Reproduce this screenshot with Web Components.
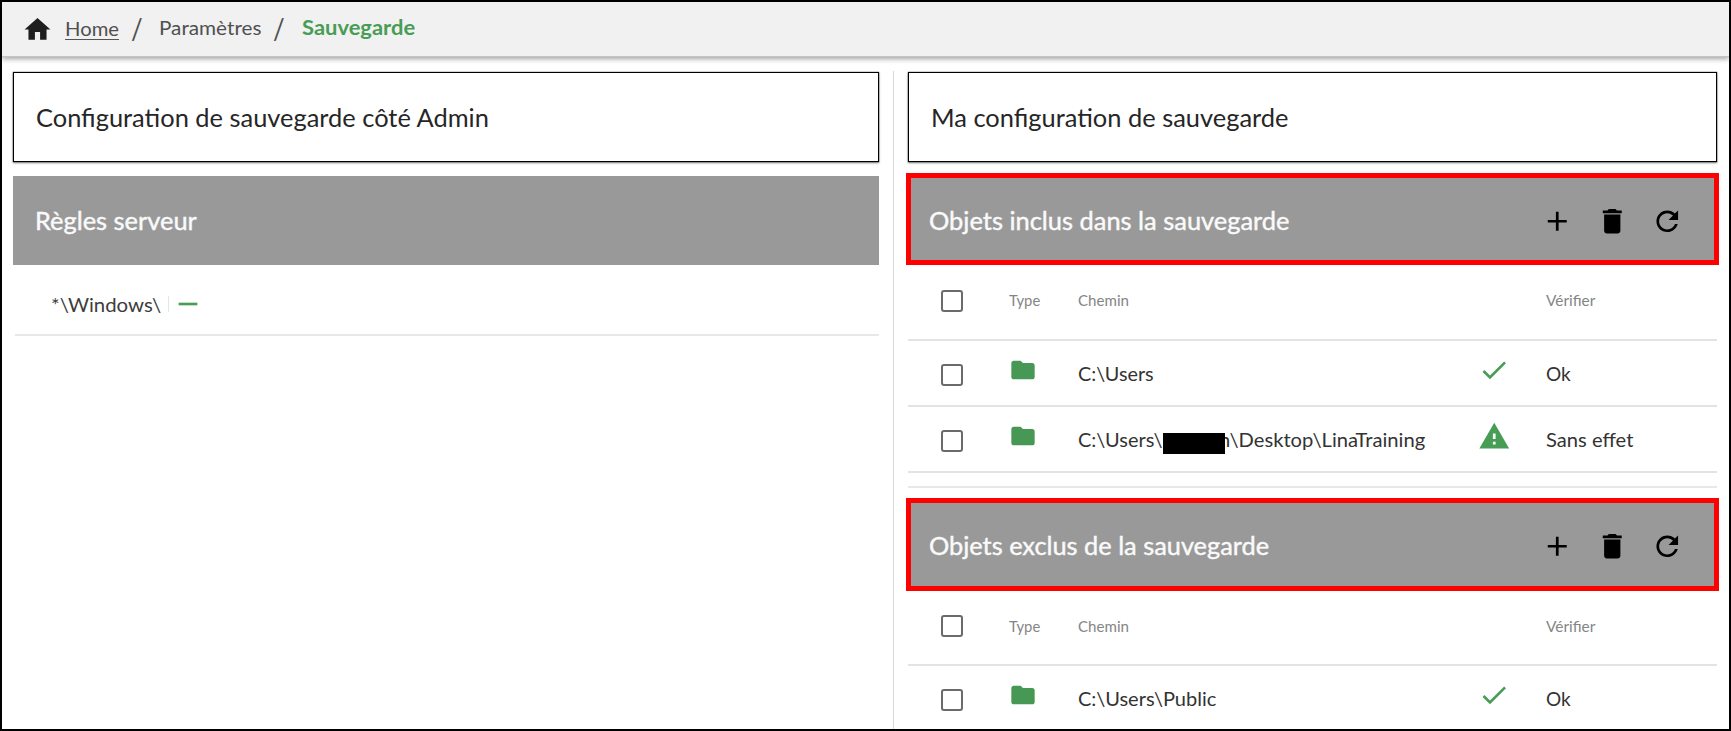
<!DOCTYPE html>
<html lang="fr">
<head>
<meta charset="utf-8">
<title>Sauvegarde</title>
<style>
  html, body { margin: 0; height: 100%; }
  body { font-family: Lato, "Open Sans", sans-serif; color: #2a2a2a; background: #fff; overflow: hidden; }
</style>
</head>
<body>
<backup-page></backup-page>
<script>
const define = (name, html, setup) => {
  const template = document.createElement('template');
  template.innerHTML = html;
  customElements.define(name, class extends HTMLElement {
    connectedCallback() {
      if (this.shadowRoot) return;
      this.attachShadow({ mode: 'open' }).append(template.content.cloneNode(true));
      if (setup) setup(this, this.shadowRoot);
    }
  });
};

/* Text condensed or expanded to an exact advance width. */
define('fit-text', `
<style>
  :host { display: inline-block; white-space: nowrap; line-height: 1.2; flex: none; }
  span { display: inline-block; transform-origin: 0 50%; white-space: pre; }
</style><span><slot></slot></span>`, (el, root) => {
  const span = root.querySelector('span');
  const w = +el.getAttribute('w');
  span.style.transform = 'scaleX(' + w / span.offsetWidth + ')';
  el.style.width = w + 'px';
});

const ICONS = {
  home: 'M10 20v-6h4v6h5v-8h3L12 3 2 12h3v8z',
  add: 'M19 13h-6v6h-2v-6H5v-2h6V5h2v6h6v2z',
  delete: 'M6 19c0 1.1.9 2 2 2h8c1.1 0 2-.9 2-2V7H6v12zM19 4h-3.5l-1-1h-5l-1 1H5v2h14V4z',
  refresh: 'M17.65 6.35C16.2 4.9 14.21 4 12 4c-4.42 0-7.99 3.58-7.99 8s3.57 8 7.99 8c3.73 0 6.84-2.55 7.73-6h-2.08c-.82 2.33-3.04 4-5.65 4-3.31 0-6-2.69-6-6s2.69-6 6-6c1.66 0 3.14.69 4.22 1.78L13 11h7V4l-2.35 2.35z',
  folder: 'M10 4H4c-1.1 0-1.99.9-1.99 2L2 18c0 1.1.9 2 2 2h16c1.1 0 2-.9 2-2V8c0-1.1-.9-2-2-2h-8l-2-2z',
  check: 'M9 16.17L4.83 12l-1.42 1.41L9 19 21 7l-1.41-1.41z',
  warning: 'M1 21h22L12 2 1 21zm12-3h-2v-2h2v2zm0-4h-2v-4h2v4z',
  remove: 'M19 13H5v-2h14v2z'
};
define('ui-icon', `
<style>:host { display: block; flex: none; } svg { display: block; fill: currentColor; width: 100%; height: 100%; }</style>
<svg viewBox="0 0 24 24"><path/></svg>`, (el, root) => {
  const s = el.getAttribute('size');
  el.style.width = el.style.height = s + 'px';
  root.querySelector('path').setAttribute('d', ICONS[el.getAttribute('name')]);
});

define('check-box', `
<style>:host { display: block; box-sizing: border-box; width: 22px; height: 22px; border: 2px solid #6b6b6b; border-radius: 3px; }</style>`);

define('bread-crumbs', `
<style>
  :host { display: flex; align-items: center; box-sizing: border-box; flex: none; height: 55px; padding: 0 0 5px 20px;
    background: #f1f1f1; border-bottom: 1px solid #c4c4c4; box-shadow: 0 2px 5px rgba(0,0,0,.36); font-size: 19.5px; color: #505050; position: relative; }
  ui-icon { color: #1e1e1e; margin: 6px 12px 0 0; }
  .home { margin-top: 5px; border-bottom: 1.5px solid #555; line-height: 20px; height: 20px; margin-right: 12px; }
  .sep { font-size: 28px; margin-top: 4px; }
  .par { margin: 2px 12px 0 16px; }
  .cur { margin: 1px 0 0 17px; color: #489d56; font-weight: 700; font-size: 20px; }
</style>
<ui-icon name="home" size="31"></ui-icon>
<fit-text class="home" w="54">Home</fit-text>
<fit-text class="sep" w="12">/</fit-text>
<fit-text class="par" w="102">Paramètres</fit-text>
<fit-text class="sep" w="12">/</fit-text>
<fit-text class="cur" w="113">Sauvegarde</fit-text>`);

define('title-card', `
<style>:host { display: flex; align-items: center; box-sizing: border-box; height: 90px; flex: none; margin: 1px 0 14px; padding: 1px 0 0 22px;
  border: 1px solid #000; box-shadow: 0 0 1px rgba(0,0,0,.8), 0 1px 2px rgba(0,0,0,.5); font-size: 24.3px; color: #262626; }</style><slot></slot>`);

define('section-bar', `
<style>
  :host { display: flex; align-items: center; box-sizing: border-box; height: 89px; flex: none; padding: 0 38px 0 21.5px; background: #999; color: #fafafa; font-size: 24.3px; -webkit-text-stroke: .4px #fafafa; }
  :host([outlined]) { height: 92px; margin: -3px -2px 0; padding: 3px 31px 0 18px; border: 5px solid #f00; }
  :host([tall]) { height: 93px; }
  div { display: flex; gap: 22.5px; margin: 1px 0 0 auto; color: #000; }
  :host([tall]) div { margin-top: 0; }
</style>
<slot></slot><div><slot name="actions"></slot></div>`);

define('object-row', `
<style>
  :host { display: grid; grid-template-columns: 68px 69px 400px 68px 1fr; align-items: center; box-sizing: border-box; flex: none;
    height: 66px; padding-left: 33px; border-bottom: 2px solid #e3e3e3; font-size: 19px; color: #333; }
  :host([head]) { height: 76px; font-size: 14.8px; color: #858585; }
  :host([short]) { height: 75px; }
  :host([head]) check-box { margin-top: -3px; }
  :host([head]) ::slotted(*) { margin-top: -2px; }
  ::slotted(*) { margin-top: 3px; }
  check-box { margin-top: 4px; }
  .type { margin: -6px 0 0 0; color: #489855; }
</style>
<check-box></check-box>
<slot name="type"><ui-icon class="type" name="folder" size="28"></ui-icon></slot>
<slot name="path"></slot>
<slot name="state"><span></span></slot>
<slot name="verify"></slot>`);

define('rule-row', `
<style>
  :host { display: flex; align-items: center; box-sizing: border-box; height: 71px; margin-left: 2px; padding: 8px 0 0 36px; border-bottom: 2px solid #e8e8e8; font-size: 20px; color: #3d3d3d; }
  i { width: 1px; height: 16px; margin: 1px 3px 0 7px; background: #dfeae5; }
  ui-icon { color: #489d56; margin-top: 0; }
</style>
<slot></slot><i></i><ui-icon name="remove" size="32"></ui-icon>`);

/* Path whose user name is masked by a black block. */
define('masked-path', `
<style>
  :host { display: flex; align-items: center; }
  b { width: 62px; height: 21px; margin: 6px -6px 0 0; background: #000; position: relative; z-index: 1; }
</style>
<fit-text w="85">C:\\Users\\</fit-text><b></b><fit-text w="206">n\\Desktop\\LinaTraining</fit-text>`);

const actions = `<ui-icon slot="actions" name="add" size="32.5"></ui-icon><ui-icon slot="actions" name="delete" size="32.5"></ui-icon><ui-icon slot="actions" name="refresh" size="32.5"></ui-icon>`;
const head = (attr = '') => `<object-row head ${attr}><fit-text slot="type" w="31">Type</fit-text><fit-text slot="path" w="51">Chemin</fit-text><fit-text slot="verify" w="49">Vérifier</fit-text></object-row>`;

define('backup-page', `
<style>
  :host { display: flex; flex-direction: column; box-sizing: border-box; height: 731px; border: 2px solid #000; overflow: hidden; }
  main { display: grid; grid-template-columns: 866px 29px 809px; flex: 1; min-height: 0; padding: 14px 0 0 11px; }
  section { display: flex; flex-direction: column; min-width: 0; }
  .split { margin-left: 14px; width: 1px; background: #d9d9d9; }
  .gap { height: 15px; box-sizing: border-box; flex: none; border-bottom: 2px solid #e8e8e8; }
  .second { display: flex; flex-direction: column; margin-top: 13px; }
  .state { color: #489d56; margin: -7px 0 0 0; }
  .warn { margin: -6px 0 0 -.5px; }
</style>
<bread-crumbs></bread-crumbs>
<main>
  <section>
    <title-card><fit-text w="453">Configuration de sauvegarde côté Admin</fit-text></title-card>
    <section-bar><fit-text w="162">Règles serveur</fit-text></section-bar>
    <rule-row><fit-text w="110">*\\Windows\\</fit-text></rule-row>
  </section>
  <div class="split"></div>
  <section>
    <title-card><fit-text w="358">Ma configuration de sauvegarde</fit-text></title-card>
    <section-bar outlined><fit-text w="361">Objets inclus dans la sauvegarde</fit-text>${actions}</section-bar>
    ${head()}
    <object-row><fit-text slot="path" w="76">C:\\Users</fit-text><ui-icon class="state" slot="state" name="check" size="32"></ui-icon><fit-text slot="verify" w="25">Ok</fit-text></object-row>
    <object-row><masked-path slot="path"></masked-path><ui-icon class="state warn" slot="state" name="warning" size="32.5"></ui-icon><fit-text slot="verify" w="87">Sans effet</fit-text></object-row>
    <div class="gap"></div>
    <div class="second">
      <section-bar outlined tall><fit-text w="340">Objets exclus de la sauvegarde</fit-text>${actions}</section-bar>
      ${head('short')}
      <object-row><fit-text slot="path" w="138">C:\\Users\\Public</fit-text><ui-icon class="state" slot="state" name="check" size="32"></ui-icon><fit-text slot="verify" w="25">Ok</fit-text></object-row>
    </div>
  </section>
</main>`);
</script>
</body>
</html>
